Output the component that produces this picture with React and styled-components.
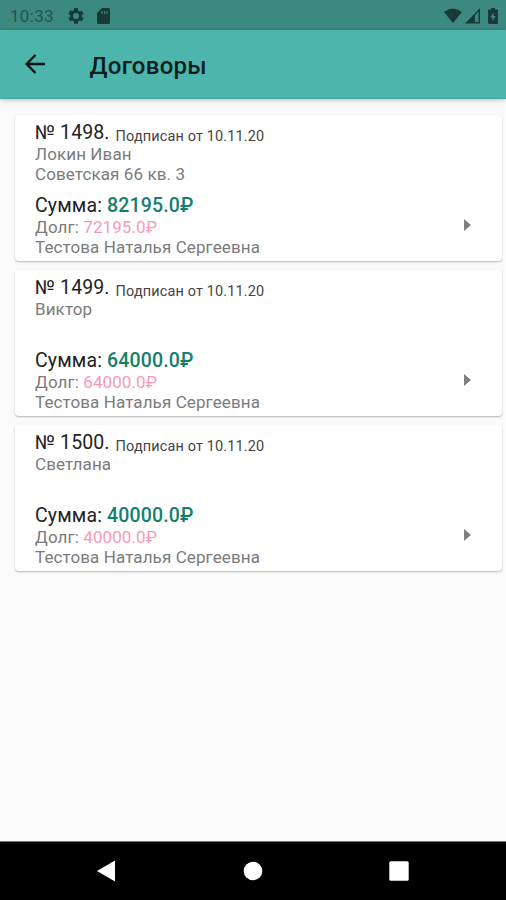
import React from "react";
import styled, { createGlobalStyle } from "styled-components";

const GlobalStyle = createGlobalStyle`
  * {
    box-sizing: border-box;
  }

  body {
    margin: 0;
    background: #fafafa;
    font-family: Roboto, "Noto Sans", sans-serif;
  }
`;

const Screen = styled.div`
  display: flex;
  flex-direction: column;
  height: 900px;
  overflow: hidden;
`;

const StatusBar = styled.div`
  display: flex;
  flex: none;
  align-items: center;
  height: 30px;
  padding: 1px 8px 0 10px;
  background: #3c897f;
  color: #183b3a;
`;

const Clock = styled.span`
  width: 58px;
  font-size: 17px;
  letter-spacing: 0.3px;
  color: #225550;
`;

const StatusIcon = styled.svg`
  flex: none;
  width: ${props => props.$width}px;
  height: 16px;
  margin-left: ${props => props.$gap || 0}px;
  fill: currentColor;
`;

const Spacer = styled.div`
  flex: 1;
`;

const Toolbar = styled.header`
  display: flex;
  flex: none;
  align-items: center;
  height: 69px;
  padding-left: 25px;
  background: #4eb5ad;
  border-bottom: 1px solid #43a79f;
  box-shadow: 0 1px 5px rgba(0, 0, 0, 0.25);
`;

const BackIcon = styled.svg`
  width: 21px;
  height: 20px;
  margin-right: 43.5px;
  fill: none;
  stroke: #0a1413;
  stroke-width: 2.3;
`;

const Title = styled.h1`
  margin: 3px 0 0;
  font-size: 24px;
  font-weight: 500;
  line-height: 30px;
  letter-spacing: 0.3px;
  color: #0b201e;
`;

const List = styled.main`
  display: flex;
  flex: 1;
  flex-direction: column;
  gap: 9.15px;
  padding: 16px 4px 0 15px;
`;

const Card = styled.article`
  display: flex;
  align-items: flex-end;
  justify-content: space-between;
  height: 146px;
  padding: 7px 31px 5px 20px;
  background: #fff;
  border-radius: 4px;
  box-shadow: 0 1px 2px rgba(0, 0, 0, 0.28);
`;

const Details = styled.div`
  display: flex;
  flex-direction: column;
  height: 100%;
  white-space: nowrap;
`;

const Heading = styled.div`
  display: flex;
  gap: 6px;
  height: 22px;
  font-size: 19.5px;
  line-height: 22px;
  letter-spacing: 0.1px;
  color: #222;
`;

const Signed = styled.span`
  padding-top: 4px;
  font-size: 14.5px;
  letter-spacing: 0.12px;
  color: #444;
`;

const Line = styled.div`
  height: 19.5px;
  font-size: 17px;
  line-height: 20px;
  letter-spacing: 0.1px;
  color: #7b7b7b;
`;

const Sum = styled.div`
  height: 23px;
  margin-top: auto;
  font-size: 19.5px;
  line-height: 24px;
  letter-spacing: 0.15px;
  color: #222;

  b {
    font-weight: 500;
    color: #14806c;
  }
`;

const Debt = styled.span`
  color: #f79ab8;
`;

const Arrow = styled.svg`
  width: 7px;
  height: 12px;
  margin-bottom: 25px;
  fill: #808080;
`;

const NavBar = styled.nav`
  display: flex;
  flex: none;
  align-items: center;
  justify-content: space-between;
  height: 59px;
  padding: 0 97px 0 96px;
  background: #000;
  border-top: 1px solid #777;
`;

const NavIcon = styled.svg`
  width: 20px;
  height: 22px;
  fill: #fff;
`;

const contracts = [
  { id: 1498, client: "Локин Иван", address: "Советская 66 кв. 3", sum: "82195.0₽", debt: "72195.0₽" },
  { id: 1499, client: "Виктор", address: "", sum: "64000.0₽", debt: "64000.0₽" },
  { id: 1500, client: "Светлана", address: "", sum: "40000.0₽", debt: "40000.0₽" }
];

const Contract = ({ id, client, address, sum, debt }) => (
  <Card>
    <Details>
      <Heading>
        № {id}.<Signed>Подписан от 10.11.20</Signed>
      </Heading>
      <Line>{client}</Line>
      <Line>{address}</Line>
      <Sum>
        Сумма: <b>{sum}</b>
      </Sum>
      <Line>
        Долг: <Debt>{debt}</Debt>
      </Line>
      <Line>Тестова Наталья Сергеевна</Line>
    </Details>
    <Arrow viewBox="0 0 7 12">
      <path d="M0 0L7 6L0 12Z" />
    </Arrow>
  </Card>
);

const App = () => (
  <Screen>
    <GlobalStyle />
    <StatusBar>
      <Clock>10:33</Clock>
      <StatusIcon $width={16} viewBox="2 2 20 20">
        <path d="M19.14 12.94c.04-.3.06-.61.06-.94s-.02-.64-.07-.94l2.03-1.58a.49.49 0 0 0 .12-.61l-1.92-3.32a.49.49 0 0 0-.59-.22l-2.39.96a7 7 0 0 0-1.62-.94l-.36-2.54A.48.48 0 0 0 13.92 2h-3.84a.48.48 0 0 0-.47.41l-.36 2.54c-.59.24-1.13.57-1.62.94l-2.39-.96a.48.48 0 0 0-.59.22L2.74 8.87a.48.48 0 0 0 .12.61l2.03 1.58c-.05.3-.09.63-.09.94s.02.64.07.94l-2.03 1.58a.49.49 0 0 0-.12.61l1.92 3.32c.12.22.37.29.59.22l2.39-.96c.5.38 1.03.7 1.62.94l.36 2.54c.05.24.24.41.48.41h3.84c.24 0 .44-.17.47-.41l.36-2.54c.59-.24 1.13-.56 1.62-.94l2.39.96c.22.08.47 0 .59-.22l1.92-3.32a.48.48 0 0 0-.12-.61zM12 15.6a3.6 3.6 0 1 1 0-7.2 3.6 3.6 0 0 1 0 7.2z" />
      </StatusIcon>
      <StatusIcon $width={13} $gap={13} viewBox="0 0 13 16">
        <path
          fillRule="evenodd"
          d="M5 0H11.5Q13 0 13 1.5V14.5Q13 16 11.5 16H1.5Q0 16 0 14.5V5ZM4.5 3V6H5.6V3ZM7 3V6H8.1V3ZM9.500 3V6H10.6V3Z"
        />
      </StatusIcon>
      <Spacer />
      <StatusIcon $width={18} viewBox="0 0 18 16">
        <path d="M0 4Q9 -3 18 4L9 15Z" />
      </StatusIcon>
      <StatusIcon $width={15} $gap={3} viewBox="0 0 15 16">
        <path fillRule="evenodd" d="M15 0V15.5H0ZM13.5 3.6L10 7.2V14H13.5Z" />
      </StatusIcon>
      <StatusIcon $width={10} $gap={8} viewBox="0 0 10 16">
        <path
          fillRule="evenodd"
          d="M3 0H7V1.5H9Q10 1.5 10 2.5V15Q10 16 9 16H1Q0 16 0 15V2.5Q0 1.5 1 1.5H3ZM5.5 4.5L2.3 9.5H4.5V13L7.7 8H5.5Z"
        />
      </StatusIcon>
    </StatusBar>
    <Toolbar>
      <BackIcon viewBox="0 0 21 20">
        <path d="M20 10H2M10.5 1L1.6 10L10.5 19" />
      </BackIcon>
      <Title>Договоры</Title>
    </Toolbar>
    <List>
      {contracts.map(contract => (
        <Contract key={contract.id} {...contract} />
      ))}
    </List>
    <NavBar>
      <NavIcon viewBox="0 0 20 22">
        <path d="M1 11L19 0.5V21.5Z" />
      </NavIcon>
      <NavIcon viewBox="0 0 20 22">
        <circle cx="10" cy="11" r="9.3" />
      </NavIcon>
      <NavIcon viewBox="0 0 20 22">
        <rect x="0.3" y="1.3" width="19.4" height="19.4" rx="1.5" />
      </NavIcon>
    </NavBar>
  </Screen>
);

export default App;
